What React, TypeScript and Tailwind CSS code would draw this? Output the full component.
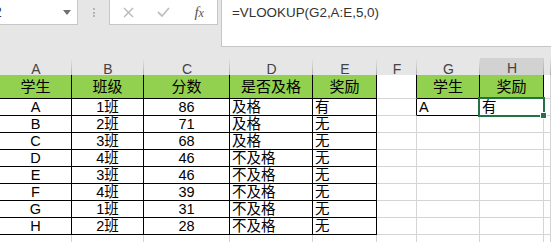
const COLS = ["A", "B", "C", "D", "E", "F", "G", "H", ""];

const ROWS: string[][] = [
  ["学生", "班级", "分数", "是否及格", "奖励", "", "学生", "奖励", ""],
  ["A", "1班", "86", "及格", "有", "", "A", "有", ""],
  ["B", "2班", "71", "及格", "无", "", "", "", ""],
  ["C", "3班", "68", "及格", "无", "", "", "", ""],
  ["D", "4班", "46", "不及格", "无", "", "", "", ""],
  ["E", "3班", "46", "不及格", "无", "", "", "", ""],
  ["F", "4班", "39", "不及格", "无", "", "", "", ""],
  ["G", "1班", "31", "不及格", "无", "", "", "", ""],
  ["H", "2班", "28", "不及格", "无", "", "", "", ""],
  ["", "", "", "", "", "", "", "", ""],
];

const GRID = "grid grid-cols-[72px_72px_86px_83px_64px_40px_63px_64px_1fr]";

function cellClass(r: number, c: number) {
  const inMain = r <= 8 && c <= 4;
  const inLookup = r <= 1 && (c === 6 || c === 7);
  const green = r === 0 && (c <= 4 || c === 6 || c === 7);
  const rightBlack = inMain || inLookup || (r <= 1 && c === 5);
  const bottomBlack = inMain || inLookup;
  const left = r > 0 && (c === 3 || c === 4 || c === 6 || c === 7);

  return [
    "relative flex items-center border-r border-b pt-[1px]",
    r === 0 ? "h-[24px]" : "h-[17px]",
    green ? "bg-[#92d050]" : "bg-white",
    rightBlack ? "border-r-black" : "border-r-[#d4d4d4]",
    bottomBlack ? "border-b-black" : "border-b-[#d4d4d4]",
    left ? "justify-start pl-[2px]" : "justify-center",
    r === 0 ? "text-[15px]" : "text-[14.5px]",
  ].join(" ");
}

export default function App() {
  return (
    <div className="h-[242px] w-[551px] overflow-hidden bg-white font-['Liberation_Sans','Noto_Sans_CJK_SC',sans-serif] text-black">
      {/* Toolbar */}
      <div className="flex h-[58px] items-start bg-[#e6e6e6]">
        <div className="flex h-[25px] w-[78px] items-center justify-between border-r border-b border-[#c6c6c6] bg-white pr-[6px]">
          <span className="-ml-[6px] text-[14px] text-[#333]">2</span>
          <svg width="8" height="5" viewBox="0 0 8 5">
            <path d="M0 0h8L4 5z" fill="#707070" />
          </svg>
        </div>
        <div className="flex w-[31px] flex-col items-center gap-[1.5px] pt-[8px]">
          <span className="h-[2px] w-[2px] bg-[#b4b4b4]" />
          <span className="h-[2px] w-[2px] bg-[#b4b4b4]" />
          <span className="h-[2px] w-[2px] bg-[#b4b4b4]" />
        </div>
        <div className="flex h-[25px] w-[109px] items-center border-x border-b border-[#c6c6c6] bg-white">
          <div className="flex w-[36px] justify-center pl-[2px]">
            <svg width="11" height="11" viewBox="0 0 11 11">
              <path d="M1 1l9 9M10 1l-9 9" stroke="#b8b8b8" strokeWidth="1.4" />
            </svg>
          </div>
          <div className="flex w-[36px] justify-center">
            <svg width="13" height="10" viewBox="0 0 13 10">
              <path d="M1 5l4 4 7-8" stroke="#c0c0c0" strokeWidth="1.8" fill="none" />
            </svg>
          </div>
          <div className="flex w-[36px] justify-center">
            <span className="font-['Liberation_Serif',serif] text-[15px] italic text-[#555]">
              f<span className="text-[12px]">x</span>
            </span>
          </div>
        </div>
        <div className="ml-[3px] h-[47px] flex-1 border-l border-b border-[#c6c6c6] bg-white pl-[10px] pt-[3px] text-[13.4px] text-[#333]">
          =VLOOKUP(G2,A:E,5,0)
        </div>
      </div>

      {/* Column headers */}
      <div className={`${GRID} h-[17px] border-b border-[#ababab]`}>
        {COLS.map((col, c) => (
          <div
            key={c}
            className={
              c === 7
                ? "flex items-center justify-center border-b-2 border-[#217346] bg-[#d2d2d2] bg-[linear-gradient(to_bottom,#d2d2d2,#9b9b9b)] bg-[length:1px_100%] bg-right bg-no-repeat text-[14px] text-[#444]"
                : "flex items-center justify-center bg-[#e6e6e6] bg-[linear-gradient(to_bottom,#e6e6e6,#9b9b9b)] bg-[length:1px_100%] bg-right bg-no-repeat text-[14px] text-[#444]"
            }
          >
            {col}
          </div>
        ))}
      </div>

      {/* Cells */}
      {ROWS.map((row, r) => (
        <div key={r} className={GRID}>
          {row.map((text, c) => (
            <div key={c} className={cellClass(r, c)}>
              {text}
              {r === 1 && c === 7 && (
                <div className="absolute -top-[2px] -right-[2px] -bottom-[2px] -left-[2px] z-10 border-2 border-[#217346]">
                  <div className="absolute -right-[4px] -bottom-[4px] h-[7px] w-[7px] border border-white bg-[#217346]" />
                </div>
              )}
            </div>
          ))}
        </div>
      ))}
    </div>
  );
}
